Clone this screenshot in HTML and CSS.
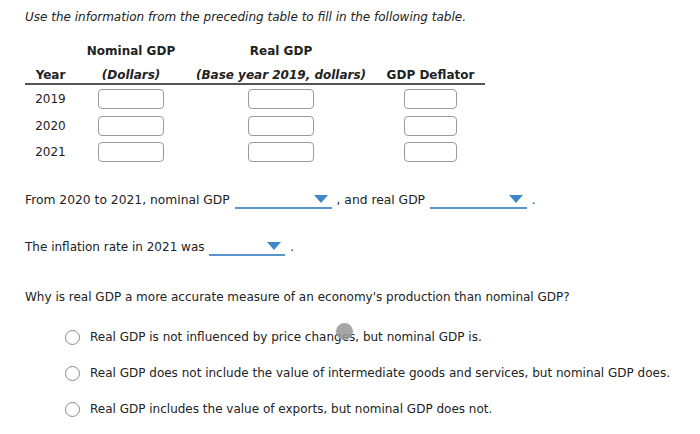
FILE: index.html
```
<!DOCTYPE html>
<html>
<head>
<meta charset="utf-8">
<link rel="stylesheet" href="styles.css">
</head>
<body>
<div class="page">
  <p class="intro">Use the information from the preceding table to fill in the following table.</p>
  <table class="gdp">
    <thead>
      <tr class="h1">
        <th class="c-year"></th>
        <th class="c-nom">Nominal GDP</th>
        <th class="c-real">Real GDP</th>
        <th class="c-def"></th>
      </tr>
      <tr class="h2">
        <th class="c-year">Year</th>
        <th class="c-nom"><i>(Dollars)</i></th>
        <th class="c-real"><i>(Base year 2019, dollars)</i></th>
        <th class="c-def">GDP Deflator</th>
      </tr>
    </thead>
    <tbody>
      <tr class="first">
        <td class="c-year">2019</td>
        <td><span class="box w66"></span></td>
        <td><span class="box w66"></span></td>
        <td><span class="box w53"></span></td>
      </tr>
      <tr>
        <td class="c-year">2020</td>
        <td><span class="box w66"></span></td>
        <td><span class="box w66"></span></td>
        <td><span class="box w53"></span></td>
      </tr>
      <tr>
        <td class="c-year">2021</td>
        <td><span class="box w66"></span></td>
        <td><span class="box w66"></span></td>
        <td><span class="box w53"></span></td>
      </tr>
    </tbody>
  </table>

  <p class="sent s1">From 2020 to 2021, nominal GDP <span class="dd d97"><span class="arrow"></span></span> , and real GDP <span class="dd d97"><span class="arrow"></span></span> .</p>
  <p class="sent s2">The inflation rate in 2021 was <span class="dd d76"><span class="arrow"></span></span> .</p>

  <p class="question">Why is real GDP a more accurate measure of an economy's production than nominal GDP?</p>
  <ul class="options">
    <li><span class="radio"></span><span class="opt">Real GDP is not influenced by price changes, but nominal GDP is.</span><span class="cursor"></span></li>
    <li><span class="radio"></span><span class="opt">Real GDP does not include the value of intermediate goods and services, but nominal GDP does.</span></li>
    <li><span class="radio"></span><span class="opt">Real GDP includes the value of exports, but nominal GDP does not.</span></li>
  </ul>
</div>
</body>
</html>
```
FILE: styles.css
```
html, body {
  margin: 0;
  padding: 0;
  background: #ffffff;
}
body {
  font-family: "DejaVu Sans", Verdana, sans-serif;
  font-size: 12px;
  color: #222222;
}
.page {
  padding: 8px 0 0 25px;
  position: relative;
}
.intro {
  margin: 0;
  font-style: italic;
  line-height: 18px;
}
.gdp {
  margin-top: 15px;
  border-collapse: collapse;
  width: 460px;
  table-layout: fixed;
}
.gdp th {
  font-weight: bold;
  text-align: center;
  padding: 0;
  line-height: 16px;
}
.gdp .c-year { width: 51px; }
.gdp .c-nom { width: 110px; }
.gdp .c-real { width: 190px; }
.gdp .c-def { width: 109px; }
.gdp .h1 th { height: 20px; vertical-align: middle; }
.gdp .h2 th {
  height: 23px;
  vertical-align: top;
  padding-top: 6px;
  box-sizing: border-box;
  border-bottom: 2px solid #555555;
}
.gdp .h2 i { font-weight: bold; }
.gdp td {
  text-align: center;
  height: 26px;
  padding: 0;
  vertical-align: middle;
  line-height: 16px;
}
.gdp .first td { height: 28px; }
.box {
  display: inline-block;
  height: 18px;
  border: 1px solid #9a9a9a;
  border-radius: 4px;
  vertical-align: middle;
}
.w66 { width: 64px; }
.w53 { width: 51px; }
.sent {
  margin: 0;
  line-height: 18px;
}
.s1 { margin-top: 26px; font-size: 12.3px; }
.s2 { margin-top: 29px; }
.dd {
  display: inline-block;
  height: 16px;
  border-bottom: 2px solid #5b93cd;
  position: relative;
  vertical-align: -5px;
  margin: 0 1px;
}
.d97 { width: 97px; }
.d76 { width: 76px; }
.arrow {
  position: absolute;
  right: 4px;
  top: 4px;
  width: 0;
  height: 0;
  border-left: 7px solid transparent;
  border-right: 7px solid transparent;
  border-top: 8px solid #3f87c8;
}
.question {
  margin: 32px 0 0 0;
  line-height: 18px;
}
.options {
  list-style: none;
  margin: 13px 0 0 0;
  padding: 0 0 0 40px;
}
.options li {
  display: flex;
  align-items: center;
  height: 36px;
  position: relative;
  white-space: nowrap;
}
.radio {
  width: 13px;
  height: 13px;
  border: 1px solid #8a8a8a;
  border-radius: 50%;
  background: #ffffff;
  flex: none;
  margin-right: 10px;
}
.cursor {
  position: absolute;
  left: 271px;
  top: 4px;
  width: 17px;
  height: 17px;
  border-radius: 50%;
  background: rgba(150, 150, 150, 0.85);
}
```
